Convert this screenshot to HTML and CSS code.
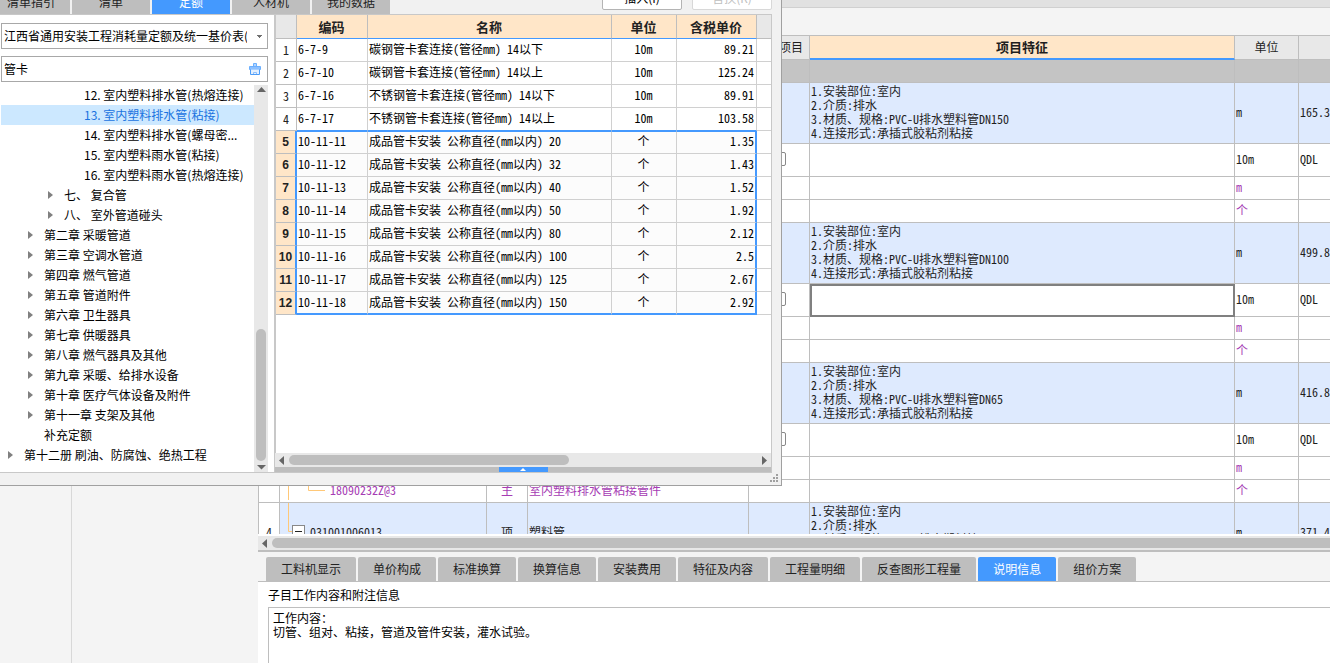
FILE: index.html
```html
<!DOCTYPE html>
<html lang="zh-CN">
<head>
<meta charset="utf-8">
<title>工程计价</title>
<link rel="stylesheet" href="styles.css">
</head>
<body>
<div class="app">
  <aside class="side"><div class="side-inner"></div></aside>
  <main class="main">
    <div class="strip"></div>
    <div class="toolbar"></div>
    <div class="sheet-area">
      <table class="sheet">
        <colgroup><col class="s-no"><col class="s-code"><col class="s-type"><col class="s-name"><col class="s-main"><col><col class="s-unit"><col class="s-exp"></colgroup>
        <thead><tr><th></th><th></th><th></th><th></th><th class="right">项目</th><th class="active">项目特征</th><th>单位</th><th></th></tr></thead>
        <tbody>
          <tr class="group"><td></td><td></td><td></td><td></td><td></td><td></td><td></td><td></td></tr>
          <tr class="item"><td></td><td></td><td></td><td></td><td></td><td>1.安装部位:室内<br>2.介质:排水<br>3.材质、规格:PVC-U排水塑料管DN150<br>4.连接形式:承插式胶粘剂粘接</td><td>m</td><td>165.3</td></tr>
          <tr class="quota"><td></td><td></td><td></td><td></td><td class="mid"><input type="checkbox" aria-label="主要项目"></td><td></td><td>10m</td><td>QDL</td></tr>
          <tr class="res"><td></td><td></td><td></td><td></td><td></td><td></td><td>m</td><td></td></tr>
          <tr class="res"><td></td><td></td><td></td><td></td><td></td><td></td><td>个</td><td></td></tr>
          <tr class="item"><td></td><td></td><td></td><td></td><td></td><td>1.安装部位:室内<br>2.介质:排水<br>3.材质、规格:PVC-U排水塑料管DN100<br>4.连接形式:承插式胶粘剂粘接</td><td>m</td><td>499.8</td></tr>
          <tr class="quota"><td></td><td></td><td></td><td></td><td class="mid"><input type="checkbox" aria-label="主要项目"></td><td class="focus"></td><td>10m</td><td>QDL</td></tr>
          <tr class="res"><td></td><td></td><td></td><td></td><td></td><td></td><td>m</td><td></td></tr>
          <tr class="res"><td></td><td></td><td></td><td></td><td></td><td></td><td>个</td><td></td></tr>
          <tr class="item"><td></td><td></td><td></td><td></td><td></td><td>1.安装部位:室内<br>2.介质:排水<br>3.材质、规格:PVC-U排水塑料管DN65<br>4.连接形式:承插式胶粘剂粘接</td><td>m</td><td>416.8</td></tr>
          <tr class="quota"><td></td><td></td><td></td><td></td><td class="mid"><input type="checkbox" aria-label="主要项目"></td><td></td><td>10m</td><td>QDL</td></tr>
          <tr class="res"><td></td><td></td><td></td><td></td><td></td><td></td><td>m</td><td></td></tr>
          <tr class="res"><td></td><td class="branch"><div class="node"><svg width="46" height="20" viewBox="0 0 46 20"><path d="M8.500 0V20M28.500 0V10.500H45" fill="none" stroke="#ffc878"/></svg>18090232Z@3</div></td><td class="mid">主</td><td>室内塑料排水管粘接管件</td><td></td><td></td><td>个</td><td></td></tr>
          <tr class="item"><td class="rowno">4</td><td class="branch"><div class="node"><svg width="26" height="58" viewBox="0 0 26 58"><path d="M8.500 0V28.500H12" fill="none" stroke="#ffc878"/><rect x="12.500" y="22.500" width="12" height="12" fill="#fff" stroke="#888"/><path d="M15 28.500H22" stroke="#222"/></svg>031001006013</div></td><td class="mid">项</td><td>塑料管</td><td></td><td>1.安装部位:室内<br>2.介质:排水<br>3.材质、规格:PVC-U排水塑料管DN50<br>4.连接形式:承插式胶粘剂粘接</td><td>m</td><td>371.4</td></tr>
        </tbody>
      </table>
    </div>
    <div class="hbar main-hbar"><svg width="14" height="13" viewBox="0 0 14 13"><path d="M9 2V11L4 6.500Z" fill="#666"/></svg><div class="thumb"></div></div>
    <nav class="tabs bottom-tabs">
      <button>工料机显示</button><button>单价构成</button><button>标准换算</button><button>换算信息</button><button>安装费用</button><button>特征及内容</button><button>工程量明细</button><button>反查图形工程量</button><button class="on">说明信息</button><button>组价方案</button>
    </nav>
    <section class="info">
      <label for="note">子目工作内容和附注信息</label>
      <textarea id="note">工作内容：
切管、组对、粘接，管道及管件安装，灌水试验。</textarea>
    </section>
  </main>
</div>

<div class="dialog">
  <header class="dialog-top">
    <nav class="tabs"><button class="first">清单指引</button><button>清单</button><button class="on">定额</button><button>人材机</button><button>我的数据</button></nav>
    <div class="actions"><button>插入(I)</button><button disabled>替换(R)</button></div>
  </header>
  <div class="dialog-body">
    <section class="left">
      <select aria-label="定额库"><option>江西省通用安装工程消耗量定额及统一基价表(2017)</option></select>
      <div class="search"><input type="text" value="管卡" aria-label="搜索"><button aria-label="清空"><svg width="14" height="14" viewBox="0 0 14 14"><path d="M5.500 5V1.500H8.500V5" fill="#b4d6ff" stroke="#6cb0ff"/><path d="M1.500 4.500H12.500V7.500H1.500Z" fill="#8cc0ff" stroke="#6cb0ff"/><path d="M2.500 7.500V12.500H11.500V7.500" fill="#e4f0ff" stroke="#4c9cf8"/><path d="M5.500 12V10.500H8.500V12" fill="none" stroke="#8cc0ff"/></svg></button></div>
      <div class="tree-wrap">
        <ul class="tree">
          <li class="l4">12. 室内塑料排水管(热熔连接)</li>
          <li class="l4 sel">13. 室内塑料排水管(粘接)</li>
          <li class="l4">14. 室内塑料排水管(螺母密...</li>
          <li class="l4">15. 室内塑料雨水管(粘接)</li>
          <li class="l4">16. 室内塑料雨水管(热熔连接)</li>
          <li class="l3 exp">七、 复合管</li>
          <li class="l3 exp">八、 室外管道碰头</li>
          <li class="l2 exp">第二章 采暖管道</li>
          <li class="l2 exp">第三章 空调水管道</li>
          <li class="l2 exp">第四章 燃气管道</li>
          <li class="l2 exp">第五章 管道附件</li>
          <li class="l2 exp">第六章 卫生器具</li>
          <li class="l2 exp">第七章 供暖器具</li>
          <li class="l2 exp">第八章 燃气器具及其他</li>
          <li class="l2 exp">第九章 采暖、给排水设备</li>
          <li class="l2 exp">第十章 医疗气体设备及附件</li>
          <li class="l2 exp">第十一章 支架及其他</li>
          <li class="l2">补充定额</li>
          <li class="l1 exp">第十二册 刷油、防腐蚀、绝热工程</li>
        </ul>
        <div class="vbar"><svg width="14" height="10" viewBox="0 0 14 10"><path d="M3 7H12L7.500 2Z" fill="#666"/></svg><div class="thumb"></div><svg width="14" height="10" viewBox="0 0 14 10"><path d="M3 3H12L7.500 7.500Z" fill="#666"/></svg></div>
      </div>
    </section>
    <section class="right-pane">
      <div class="list-area">
        <table class="list">
          <colgroup><col class="c-no"><col class="c-code"><col><col class="c-unit"><col class="c-price"><col class="c-rest"></colgroup>
          <thead><tr><th class="plain"></th><th>编码</th><th>名称</th><th>单位</th><th>含税单价</th><th class="plain"></th></tr></thead>
          <tbody class="rest">
            <tr><th>1</th><td>6-7-9</td><td>碳钢管卡套连接(管径mm) 14以下</td><td>10m</td><td>89.21</td><td></td></tr>
            <tr><th>2</th><td>6-7-10</td><td>碳钢管卡套连接(管径mm) 14以上</td><td>10m</td><td>125.24</td><td></td></tr>
            <tr><th>3</th><td>6-7-16</td><td>不锈钢管卡套连接(管径mm) 14以下</td><td>10m</td><td>89.91</td><td></td></tr>
            <tr><th>4</th><td>6-7-17</td><td>不锈钢管卡套连接(管径mm) 14以上</td><td>10m</td><td>103.58</td><td></td></tr>
          </tbody>
          <tbody class="picked">
            <tr><th>5</th><td>10-11-11</td><td>成品管卡安装 公称直径(mm以内) 20</td><td>个</td><td>1.35</td><td></td></tr>
            <tr><th>6</th><td>10-11-12</td><td>成品管卡安装 公称直径(mm以内) 32</td><td>个</td><td>1.43</td><td></td></tr>
            <tr><th>7</th><td>10-11-13</td><td>成品管卡安装 公称直径(mm以内) 40</td><td>个</td><td>1.52</td><td></td></tr>
            <tr><th>8</th><td>10-11-14</td><td>成品管卡安装 公称直径(mm以内) 50</td><td>个</td><td>1.92</td><td></td></tr>
            <tr><th>9</th><td>10-11-15</td><td>成品管卡安装 公称直径(mm以内) 80</td><td>个</td><td>2.12</td><td></td></tr>
            <tr><th>10</th><td>10-11-16</td><td>成品管卡安装 公称直径(mm以内) 100</td><td>个</td><td>2.5</td><td></td></tr>
            <tr><th>11</th><td>10-11-17</td><td>成品管卡安装 公称直径(mm以内) 125</td><td>个</td><td>2.67</td><td></td></tr>
            <tr><th>12</th><td>10-11-18</td><td>成品管卡安装 公称直径(mm以内) 150</td><td>个</td><td>2.92</td><td></td></tr>
          </tbody>
        </table>
      </div>
      <div class="hbar list-hbar"><svg width="14" height="13" viewBox="0 0 14 13"><path d="M9 2V11L4 6.500Z" fill="#666"/></svg><div class="thumb"></div><svg width="14" height="13" viewBox="0 0 14 13"><path d="M5 2V11L10 6.500Z" fill="#666"/></svg></div>
      <div class="splitter"><button aria-label="展开"><svg width="6" height="4" viewBox="0 0 6 4"><path d="M0 4H6L3 1Z" fill="#fff"/></svg></button></div>
    </section>
  </div>
  <footer class="dialog-foot"><svg width="8" height="8" viewBox="0 0 8 8" fill="#a0a0a0"><path d="M6 0h2v2H6zM3 3h2v2H3zM6 3h2v2H6zM0 6h2v2H0zM3 6h2v2H3zM6 6h2v2H6z"/></svg></footer>
</div>
</body>
</html>
```
FILE: styles.css
```css
* { box-sizing: border-box; }
body {
  margin: 0;
  height: 100vh;
  overflow: hidden;
  position: relative;
  background: #f4f4f4;
  color: #1e1e1e;
  font: 12px/14px "Noto Sans CJK SC", sans-serif;
}
button, input, select, textarea { font: inherit; color: inherit; margin: 0; }
table { border-collapse: separate; border-spacing: 0; table-layout: fixed; width: 100%; }
svg { display: block; flex: none; }
ul { list-style: none; margin: 0; padding: 0; }

.app { display: flex; height: 100%; }
.side { width: 258px; flex: none; }
.side-inner { width: 72px; height: 100%; border-right: 1px solid #d8d8d8; }
.main { flex: 1; min-width: 0; display: flex; flex-direction: column; }
.strip { height: 8px; background: #e1e1e1; border-bottom: 1px solid #d0d0d0; }
.toolbar { height: 27px; }

/* bill of quantities */
.sheet-area { flex: 1; min-height: 0; overflow: hidden; background: #fff; border-top: 1px solid #bebebe; border-left: 1px solid #bebebe; }
.sheet, .list { font-family: "Noto Sans Mono CJK SC", "Noto Sans CJK SC", monospace; }
.s-no { width: 21px; } .s-code { width: 207px; } .s-type { width: 41px; } .s-name { width: 221px; }
.s-main { width: 61px; } .s-unit { width: 64px; } .s-exp { width: 31px; }
.sheet th { height: 24px; padding: 0 0 1px; background: #e8e8e8; font-weight: 400; }
.sheet th, .sheet td { border-right: 1px solid #bebebe; border-bottom: 1px solid #bebebe; overflow: hidden; white-space: nowrap; }
.sheet th:last-child, .sheet td:last-child { border-right: 0; }
.sheet td { padding: 0 0 2px 1px; }
.sheet th.right { text-align: right; padding-right: 6px; }
.sheet th.active { background: #ffe6c8; border-bottom: 2px solid #4499fe; font-weight: 700; font-size: 13px; }
.group td { height: 23px; background: #c4c4c4; }
.item td { height: 61px; background: #deeafe; }
.item td.rowno { background: #fff; text-align: center; padding-left: 0; }
.quota td { height: 33px; }
.res td { height: 23px; color: #a63cb4; }
.sheet td.focus { border: 2px solid #808080; }
.sheet td.mid { text-align: center; padding-left: 0; }
.sheet td.branch { padding-left: 0; }
.node { display: flex; align-items: center; gap: 4px; }
.mid input { appearance: none; display: block; width: 14px; height: 14px; margin: 0 auto; border: 1px solid #888; border-radius: 2px; background: #fff; }

/* scroll bars */
.hbar { display: flex; align-items: center; background: #e8e8e8; flex: none; }
.thumb { background: #bebebe; border-radius: 5px; }
.main-hbar { height: 18px; border-top: 2px solid #fff; border-bottom: 2px solid #bebebe; }
.main-hbar .thumb { flex: 1; height: 10px; border-radius: 5px 0 0 5px; }

/* tabs */
.tabs { display: flex; gap: 2px; }
.tabs button { height: 24px; padding: 0 15px; border: 0; border-radius: 2px 2px 0 0; background: #bebebe; color: #222; white-space: nowrap; }
.tabs button.on { background: #4499fe; color: #fff; }
.bottom-tabs { flex: none; padding: 5px 8px 0; border-bottom: 1px solid #bebebe; }
.info { flex: none; height: 81px; display: flex; flex-direction: column; background: #fff; padding: 6px 0 0 10px; gap: 5px; color: #000; }
.info textarea { flex: 1; border: 1px solid #bebebe; border-width: 1px 0 0 1px; padding: 3px 4px; resize: none; outline: 0; background: #fff; }

/* quota lookup dialog */
.dialog { position: absolute; top: 0; left: 0; width: 782px; background: #f1f1f1; border: 1px solid #a0a0a0; border-width: 0 1px 1px 0; color: #000; }
.dialog-top { height: 14px; display: flex; align-items: flex-end; justify-content: space-between; overflow: hidden; }
.dialog-top .tabs button { width: 78px; padding: 0; }
.dialog-top .tabs .first { width: 70px; padding-right: 8px; }
.actions { display: flex; gap: 10px; padding: 0 9px 4px 0; }
.actions button { width: 80px; height: 26px; padding: 2px 0 0; border: 1px solid #b4b4b4; border-radius: 2px; background: #fff; }
.actions button:disabled { color: #c0c0c0; border-color: #d8d8d8; }
.dialog-body { display: flex; height: 459px; margin-right: 9px; border: 1px solid #c8c8c8; border-left: 0; }
.left { width: 275px; flex: none; display: flex; flex-direction: column; gap: 7px; padding: 8px 6px 0 1px; background: #fff; border-right: 1px solid #c8c8c8; }
.left select { width: 267px; height: 26px; appearance: none; border: 1px solid #a8a8a8; border-radius: 0; padding: 0 20px 0 2px; color: #000;
  background: linear-gradient(#707070, #707070) right 5px top 11px / 5px 1px no-repeat, linear-gradient(#707070, #707070) right 6px top 12px / 3px 1px no-repeat, linear-gradient(#707070, #707070) right 7px top 13px / 1px 1px no-repeat, #fff; }
.search { width: 267px; height: 26px; display: flex; align-items: center; border: 1px solid #a8a8a8; padding: 0 5px 0 2px; }
.search input { flex: 1; min-width: 0; border: 0; padding: 0; outline: 0; background: none; }
.search button { border: 0; padding: 0; background: none; }
.tree-wrap { display: flex; flex: 1; min-height: 0; margin-top: -4px; }
.tree { flex: 1; min-width: 0; }
.tree li { height: 20px; line-height: 20px; white-space: nowrap; display: flex; align-items: center; }
.tree .sel { background: #cce8ff; color: #1a73e0; }
.l4 { padding-left: 83px; } .l3 { padding-left: 63px; } .l2 { padding-left: 43px; } .l1 { padding-left: 23px; }
.exp::before { content: ""; width: 5px; height: 8px; margin: 0 11px 0 -16px; background: #808080; clip-path: polygon(0 0, 100% 50%, 0 100%); }
.vbar { width: 14px; flex: none; display: flex; flex-direction: column; background: #e8e8e8; }
.vbar .thumb { width: 10px; height: 132px; margin: auto auto 1px; }

.right-pane { flex: 1; min-width: 0; display: flex; flex-direction: column; background: #fff; }
.list-area { flex: 1; min-height: 0; border-left: 1px solid #c8c8c8; }
.c-no { width: 21px; } .c-code { width: 71px; } .c-unit { width: 65px; } .c-price { width: 80px; } .c-rest { width: 14px; }
.list th, .list td { height: 23px; padding: 0 2px 0 1px; border-right: 1px solid #d0d0d0; border-bottom: 1px solid #d0d0d0; white-space: nowrap; overflow: hidden; text-align: left; }
.list thead th { height: 24px; background: #ffe6c8; border-bottom-color: #4499fe; border-right-color: #bebebe; font-size: 13px; text-align: center; color: #222; }
.list thead .plain { background: #e8e8e8; border-bottom-color: #bebebe; }
.list tbody th { padding: 0; text-align: center; font-weight: 400; border-color: #bebebe; color: #222; }
.list tbody td { padding-bottom: 3px; }
.list td:nth-child(4) { text-align: center; }
.list td:nth-child(5) { text-align: right; }
.list td:last-child, .list th:last-child { border-right: 0; }
.list .picked th { background: #ffe6c8; font: 700 12px/14px "Liberation Sans", sans-serif; border-right: 2px solid #4499fe; }
.picked td { background: #fcfcfc; }
.picked td:last-child { background: #fff; }
.list .picked td:nth-child(5) { border-right: 2px solid #4499fe; padding-right: 1px; }
.list .rest tr:last-child td:not(:last-child) { border-bottom-color: #4499fe; }
.list .picked tr:first-child td:not(:last-child) { border-top: 1px solid #4499fe; }
.list .picked tr:last-child td:not(:last-child) { border-bottom: 2px solid #4499fe; padding-bottom: 2px; }
.list-hbar { height: 14px; justify-content: space-between; }
.list-hbar .thumb { width: 280px; height: 10px; margin-right: auto; }
.splitter { height: 5px; display: flex; justify-content: center; background: #bebebe; }
.splitter button { width: 49px; height: 5px; padding: 0; border: 0; background: #4499fe; display: flex; justify-content: center; }
.dialog-foot { height: 12px; display: flex; justify-content: flex-end; padding: 1px 3px; }
.dialog-body { border-right: 1px solid #c8c8c8; }
```
